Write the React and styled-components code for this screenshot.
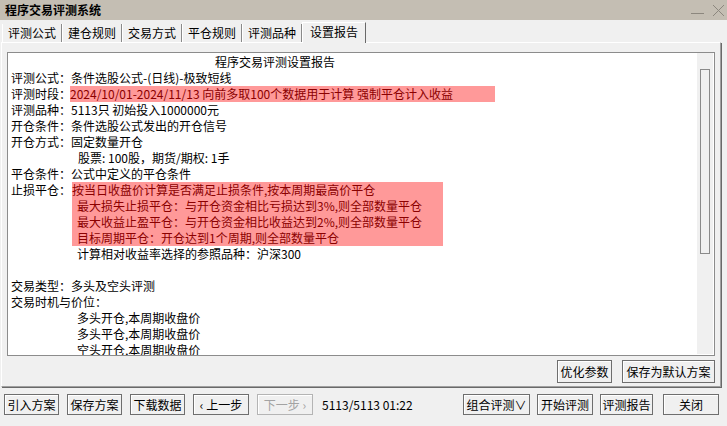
import React from "react";
import styled, { createGlobalStyle } from "styled-components";

const Global = createGlobalStyle`
  html, body { margin: 0; padding: 0; background: #f0f0f0; }
  body { font-family: "Noto Sans CJK SC", "Noto Sans", sans-serif; font-size: 12px; color: #000; }
`;

const Window = styled.div`
  width: 727px;
  height: 426px;
  display: flex;
  flex-direction: column;
  background: #f0f0f0;
  overflow: hidden;
`;

const TitleBar = styled.div`
  height: 20px;
  flex: none;
  background: #c4beb3;
  display: flex;
  align-items: center;
  justify-content: space-between;
  padding-left: 5px;
  font-weight: bold;
  font-size: 12px;
  line-height: 20px;
`;

const Controls = styled.div`
  display: flex;
  align-items: center;
  gap: 7px;
  padding-right: 2px;
`;

const TabBar = styled.div`
  height: 22px;
  flex: none;
  display: flex;
  align-items: flex-end;
  padding-left: 2px;
  position: relative;
  z-index: 1;
`;

const Tab = styled.div`
  box-sizing: border-box;
  width: ${(p) => (p.$active ? 64 : 60)}px;
  height: ${(p) => (p.$active ? 21 : 18)}px;
  margin-bottom: ${(p) => (p.$active ? -1 : 0)}px;
  background: #f0f0f0;
  border-left: 1px solid #ffffff;
  border-right: 1px solid ${(p) => (p.$active ? "#696969" : "#8a8a8a")};
  border-top: ${(p) => (p.$active ? "1px solid #ffffff" : "none")};
  display: flex;
  align-items: center;
  justify-content: center;
  font-size: 12px;
  line-height: 16px;
  padding-bottom: ${(p) => (p.$active ? 2 : 0)}px;
`;

const Panel = styled.div`
  box-sizing: border-box;
  width: 720px;
  height: 345px;
  margin-left: 1px;
  flex: none;
  border-top: 1px solid #ffffff;
  border-left: 1px solid #ffffff;
  border-right: 1px solid #a0a0a0;
  border-bottom: 1px solid #a0a0a0;
  box-shadow: 1px 1px 0 #696969;
  padding: 9px 5px 0 5px;
  display: flex;
  flex-direction: column;
`;

const TextBox = styled.div`
  box-sizing: border-box;
  height: 304px;
  border: 1px solid #8c8c8c;
  background: #ffffff;
  display: flex;
  flex: none;
`;

const Content = styled.div`
  flex: 1;
  overflow: hidden;
  padding: 1px 0 0 3px;
  line-height: 16px;
  font-size: 12px;
`;

const Line = styled.div`
  height: 16px;
  white-space: pre;
  padding-left: ${(p) => p.$indent || 0}px;
  display: flex;
`;

const Label = styled.span`
  width: 60px;
  flex: none;
`;

const Mark = styled.span`
  background: #ff9999;
  color: #8b0000;
  width: ${(p) => p.$w}px;
  margin-left: ${(p) => p.$ml || 0}px;
  flex: none;
`;

const MarkBlock = styled.div`
  display: flex;
  align-items: flex-start;
`;

const MarkBox = styled.div`
  background: #ff9999;
  color: #8b0000;
  width: 371px;
  margin-left: 1px;
`;

const MarkLine = styled.div`
  height: 16px;
  white-space: pre;
  padding-left: ${(p) => p.$indent || 0}px;
`;

const ScrollBar = styled.div`
  width: 16px;
  flex: none;
  margin: 0 1px 1px 0;
  background: #f0f0f0;
  box-sizing: border-box;
  padding: 16px 3px 0 3px;
`;

const Thumb = styled.div`
  box-sizing: border-box;
  height: 185px;
  border: 1px solid #8a8a8a;
  background: #f0f0f0;
`;

const PanelButtons = styled.div`
  display: flex;
  justify-content: flex-end;
  gap: 10px;
  margin-top: 4px;
`;

const Button = styled.button`
  box-sizing: border-box;
  width: ${(p) => p.$w}px;
  height: ${(p) => p.$h || 21}px;
  padding: 0;
  margin: 0 0 0 ${(p) => p.$ml || 0}px;
  border: 1px solid ${(p) => (p.disabled ? "#b4b4b4" : "#6e6e6e")};
  box-shadow: inset 1px 1px 0 #ffffff;
  background: #f0f0f0;
  color: ${(p) => (p.disabled ? "#a3a3a3" : "#000")};
  font-family: "Noto Sans CJK SC", "Noto Sans", sans-serif;
  font-size: 12px;
  line-height: 16px;
  display: flex;
  align-items: center;
  justify-content: center;
  flex: none;
  white-space: pre;
`;

const BottomBar = styled.div`
  display: flex;
  align-items: center;
  padding: 7px 0 0 4px;
  height: 21px;
`;

const Group = styled.div`
  display: flex;
  gap: ${(p) => p.$gap || 8}px;
  align-items: center;
`;

const Status = styled.span`
  margin-left: 9px;
  width: 141px;
  font-size: 12px;
  flex: none;
`;

function WinControls() {
  return (
    <Controls>
      <svg width="14" height="12" viewBox="0 0 14 12">
        <line x1="0" y1="9.5" x2="13" y2="9.5" stroke="#8c877e" strokeWidth="1" />
      </svg>
      <svg width="13" height="13" viewBox="0 0 13 13">
        <line x1="1" y1="1" x2="12" y2="12" stroke="#8c877e" strokeWidth="1" />
        <line x1="12" y1="1" x2="1" y2="12" stroke="#8c877e" strokeWidth="1" />
      </svg>
    </Controls>
  );
}

const tabs = ["评测公式", "建仓规则", "交易方式", "平仓规则", "评测品种", "设置报告"];

export default function App() {
  return (
    <>
      <Global />
      <Window>
        <TitleBar>
          <span>程序交易评测系统</span>
          <WinControls />
        </TitleBar>
        <TabBar>
          {tabs.map((t, i) => (
            <Tab key={t} $active={i === tabs.length - 1}>
              {t}
            </Tab>
          ))}
        </TabBar>
        <Panel>
          <TextBox>
            <Content>
              <Line $indent={204}>程序交易评测设置报告</Line>
              <Line>
                <Label>评测公式：</Label>条件选股公式-(日线)-极致短线
              </Line>
              <Line>
                <Label>评测时段：</Label>
                <Mark $w={425} $ml={-1}>2024/10/01-2024/11/13 向前多取100个数据用于计算 强制平仓计入收益</Mark>
              </Line>
              <Line>
                <Label>评测品种：</Label>5113只 初始投入1000000元
              </Line>
              <Line>
                <Label>开仓条件：</Label>条件选股公式发出的开仓信号
              </Line>
              <Line>
                <Label>开仓方式：</Label>固定数量开仓
              </Line>
              <Line $indent={67}>股票: 100股，期货/期权: 1手</Line>
              <Line>
                <Label>平仓条件：</Label>公式中定义的平仓条件
              </Line>
              <MarkBlock>
                <Label>止损平仓：</Label>
                <MarkBox>
                  <MarkLine>按当日收盘价计算是否满足止损条件,按本周期最高价平仓</MarkLine>
                  <MarkLine $indent={5}>最大损失止损平仓：与开仓资金相比亏损达到3%,则全部数量平仓</MarkLine>
                  <MarkLine $indent={5}>最大收益止盈平仓：与开仓资金相比收益达到2%,则全部数量平仓</MarkLine>
                  <MarkLine $indent={5}>目标周期平仓：开仓达到1个周期,则全部数量平仓</MarkLine>
                </MarkBox>
              </MarkBlock>
              <Line $indent={66}>计算相对收益率选择的参照品种：沪深300</Line>
              <Line />
              <Line>
                <Label>交易类型：</Label>多头及空头评测
              </Line>
              <Line>交易时机与价位：</Line>
              <Line $indent={66}>多头开仓,本周期收盘价</Line>
              <Line $indent={66}>多头平仓,本周期收盘价</Line>
              <Line $indent={66}>空头开仓,本周期收盘价</Line>
            </Content>
            <ScrollBar>
              <Thumb />
            </ScrollBar>
          </TextBox>
          <PanelButtons>
            <Button $w={55} $h={23}>优化参数</Button>
            <Button $w={93} $h={23}>保存为默认方案</Button>
          </PanelButtons>
        </Panel>
        <BottomBar>
          <Group $gap={8}>
            <Button $w={55}>引入方案</Button>
            <Button $w={55}>保存方案</Button>
            <Button $w={55}>下载数据</Button>
            <Button $w={56}>{"‹ 上一步"}</Button>
            <Button $w={56} disabled>{"下一步 ›"}</Button>
          </Group>
          <Status>5113/5113 01:22</Status>
          <Group $gap={7}>
            <Button $w={67}>组合评测∨</Button>
            <Button $w={56}>开始评测</Button>
            <Button $w={53}>评测报告</Button>
            <Button $w={56} $ml={3}>关闭</Button>
          </Group>
        </BottomBar>
      </Window>
    </>
  );
}
